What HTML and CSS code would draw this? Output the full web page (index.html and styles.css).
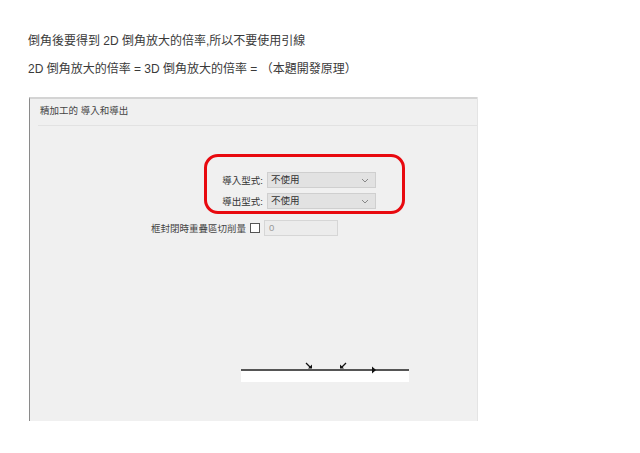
FILE: index.html
```html
<!DOCTYPE html>
<html lang="zh-Hant">
<head>
    <meta charset="UTF-8">
    <title>倒角放大倍率</title>
    <link rel="stylesheet" href="styles.css">
</head>
<body>
    <div class="intro">
        <p>倒角後要得到 2D 倒角放大的倍率,所以不要使用引線</p>
        <p>2D 倒角放大的倍率 = 3D 倒角放大的倍率 = （本題開發原理）</p>
    </div>
    <!-- dialog screenshot -->
    <div class="panel">
        <div class="panel-title">精加工的 導入和導出</div>
        <div class="panel-body">
            <div class="row">
                <span class="label">導入型式:</span>
                <div class="select">不使用<svg width="8" height="5" viewBox="0 0 8 5"><path d="M1 1l3 3 3-3" fill="none" stroke="#888" stroke-width="1"/></svg></div>
            </div>
            <div class="row">
                <span class="label">導出型式:</span>
                <div class="select">不使用<svg width="8" height="5" viewBox="0 0 8 5"><path d="M1 1l3 3 3-3" fill="none" stroke="#888" stroke-width="1"/></svg></div>
            </div>
            <div class="row row-check">
                <span class="label">框封閉時重疊區切削量</span>
                <span class="checkbox"></span>
                <div class="num">0</div>
            </div>
            <div class="red-mark"></div>
        </div>
        <div class="diagram">
            <svg width="168" height="9" viewBox="0 0 168 9">
                <path d="M65 1l4.5 4.5" stroke="#111" stroke-width="1.2"/>
                <path d="M67 6.5h4v-4z" fill="#111"/>
                <path d="M105 1l-4.5 4.5" stroke="#111" stroke-width="1.2"/>
                <path d="M99 6.5h4l-4-4z" fill="#111"/>
                <path d="M0 8h168" stroke="#222" stroke-width="1.4"/>
                <path d="M131 4.5l4 3.5-4 3.5z" fill="#111"/>
            </svg>
            <div class="strip"></div>
        </div>
    </div>
</body>
</html>
```

FILE: styles.css
```css
body {
    margin: 0;
    background: #fff;
    font-family: "Liberation Sans", "Noto Sans CJK TC", sans-serif;
    color: #3a3a3a;
}
.intro {
    padding: 33px 0 0 28px;
}
.intro p {
    margin: 0 0 12px 0;
    font-size: 12px;
    line-height: 16px;
}
.panel {
    margin: 20px 0 0 29px;
    width: 447px;
    height: 322px;
    background: #f0f0f0;
    border-top: 2px solid #d4d4d4;
    border-left: 1px solid #8a8a8a;
    box-shadow: 1px 0 0 #e4e4e4;
}
.panel-title {
    margin: 0 0 0 8px;
    padding: 4px 0 6px 2px;
    height: 16px;
    font-size: 9.5px;
    line-height: 16px;
    color: #444;
    border-bottom: 1px solid #e2e2e2;
}
.panel-body {
    position: relative;
    padding-top: 46px;
    display: flex;
    flex-direction: column;
    gap: 5px;
}
.row {
    display: flex;
    align-items: center;
    gap: 4px;
    padding-left: 170px;
    height: 16px;
    font-size: 9.5px;
    color: #333;
}
.row .label {
    width: 63px;
    text-align: right;
}
.select {
    width: 98px;
    height: 14px;
    border: 1px solid #cfcfcf;
    background: #e2e2e2;
    display: flex;
    align-items: center;
    justify-content: space-between;
    padding: 0 6px 0 3px;
    line-height: 14px;
}
.row-check {
    padding-left: 100px;
    margin-top: 6px;
}
.row-check .label {
    width: 116px;
    color: #444;
}
.checkbox {
    width: 8px;
    height: 8px;
    border: 1px solid #555;
    background: #fff;
}
.num {
    width: 68px;
    height: 14px;
    padding-left: 4px;
    border: 1px solid #d6d6d6;
    background: #ececec;
    color: #999;
    line-height: 13px;
}
.red-mark {
    position: absolute;
    left: 174px;
    top: 28px;
    width: 195px;
    height: 54px;
    border: 3px solid #e8090f;
    border-radius: 14px;
}
.diagram {
    margin: 126px 0 0 211px;
    width: 168px;
}
.diagram svg {
    display: block;
    overflow: visible;
}
.strip {
    height: 11px;
    background: #fff;
}
```
